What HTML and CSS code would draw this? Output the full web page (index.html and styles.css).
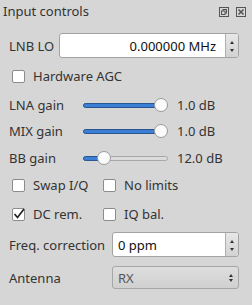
FILE: index.html
```
<!doctype html>
<html>
<head>
<meta charset="utf-8">
<title>Input controls</title>
<link rel="stylesheet" href="styles.css">
</head>
<body>
<div id="dock">
  <div class="titlebar">
    <span class="title">Input controls</span>
    <span class="tbtns">
      <svg width="10" height="10" viewBox="0 0 10 10"><rect x="0.5" y="0.5" width="9" height="9" fill="none" stroke="#555"/><rect x="4" y="2.5" width="3.5" height="3.5" fill="none" stroke="#555"/><rect x="2.5" y="4" width="3.5" height="3.5" fill="#d6d6d6" stroke="#555"/></svg>
      <svg width="10" height="10" viewBox="0 0 10 10"><rect x="0.5" y="0.5" width="9" height="9" fill="none" stroke="#555"/><path d="M2.5 2.5 L7.5 7.5 M7.5 2.5 L2.5 7.5" stroke="#555" stroke-width="1.6"/></svg>
    </span>
  </div>

  <div class="row r-lnb">
    <label class="lbl">LNB LO</label>
    <div class="spin lnb">
      <div class="spin-val right">0.000000 MHz</div>
      <div class="spin-btn"><span class="up"></span><span class="down"></span></div>
    </div>
  </div>

  <div class="row r-agc">
    <div class="check"><span class="box"></span>Hardware AGC</div>
  </div>

  <div class="row slider-row r-lna">
    <span class="lbl">LNA gain</span>
    <div class="slider"><div class="fill" style="width:77px"></div><div class="knob" style="left:70px"></div></div>
    <span class="val">1.0 dB</span>
  </div>
  <div class="row slider-row r-mix">
    <span class="lbl">MIX gain</span>
    <div class="slider"><div class="fill" style="width:77px"></div><div class="knob" style="left:70px"></div></div>
    <span class="val">1.0 dB</span>
  </div>
  <div class="row slider-row r-bb">
    <span class="lbl">BB gain</span>
    <div class="slider"><div class="fill" style="width:20px"></div><div class="knob" style="left:13px"></div></div>
    <span class="val">12.0 dB</span>
  </div>

  <div class="row r-swap">
    <div class="check c1"><span class="box"></span>Swap I/Q</div>
    <div class="check"><span class="box"></span>No limits</div>
  </div>
  <div class="row r-dc">
    <div class="check c1"><span class="box"><svg width="14" height="14" viewBox="0 0 14 14"><path d="M2.5 7 L5.5 10.5 L12 2" fill="none" stroke="#222" stroke-width="1.7"/></svg></span>DC rem.</div>
    <div class="check"><span class="box"></span>IQ bal.</div>
  </div>

  <div class="row r-freq">
    <label class="lbl">Freq. correction</label>
    <div class="spin small">
      <div class="spin-val">0 ppm</div>
      <div class="spin-btn"><span class="up"></span><span class="down"></span></div>
    </div>
  </div>
  <div class="row r-ant">
    <label class="lbl">Antenna</label>
    <div class="combo">
      <span>RX</span>
      <span class="combo-arr"><span class="up"></span><span class="down"></span></span>
    </div>
  </div>
</div>
</body>
</html>
```

FILE: styles.css
```
body {
	margin: 0;
	background: #d6d6d6;
	font-family: "Noto Sans", sans-serif;
	font-size: 13px;
	color: #333;
}
#dock {
	width: 252px;
	height: 305px;
}
.titlebar {
	height: 24px;
	display: flex;
	align-items: center;
	justify-content: space-between;
	padding: 0 6px 0 3px;
}
.title {
	margin-top: -2px;
}
.tbtns {
	display: flex;
	gap: 7px;
	margin-top: -1px;
}
.tbtns svg {
	display: block;
}
.row {
	display: flex;
	align-items: center;
	padding-left: 9px;
}
.r-lnb { margin-top: 9px; height: 25px; }
.r-agc { margin-top: 10px; height: 16px; }
.r-lna { margin-top: 12px; height: 18px; }
.r-mix { margin-top: 8px; height: 18px; }
.r-bb { margin-top: 9px; height: 18px; }
.r-swap { margin-top: 10px; height: 16px; }
.r-dc { margin-top: 13px; height: 16px; }
.r-freq { margin-top: 10px; height: 25px; }
.r-ant { margin-top: 9px; height: 23px; }

.r-lnb .lbl { width: 50px; }
.r-freq .lbl, .r-ant .lbl { width: 103px; }

/* spin boxes */
.spin {
	display: flex;
	height: 25px;
	box-sizing: border-box;
	border: 1px solid #a3a3a3;
	border-radius: 3px;
	background: #fff;
	overflow: hidden;
}
.spin.lnb { width: 180px; }
.spin.small { width: 127px; }
.spin-val {
	flex: 1;
	display: flex;
	align-items: center;
	padding-left: 5px;
	color: #111;
}
.spin-val.right {
	justify-content: flex-end;
	padding-right: 9px;
}
.spin-btn {
	width: 12px;
	border-left: 1px solid #b0b0b0;
	background: linear-gradient(#e8e8e8, #d2d2d2);
	display: flex;
	flex-direction: column;
	align-items: center;
	justify-content: space-between;
	padding: 7px 0 5px;
}
.up, .down {
	width: 0;
	height: 0;
	border-left: 2px solid transparent;
	border-right: 2px solid transparent;
}
.up { border-bottom: 3px solid #333; }
.down { border-top: 3px solid #333; }

/* check boxes */
.check {
	display: flex;
	align-items: center;
}
.check.c1 { width: 91px; }
.box {
	width: 13px;
	height: 13px;
	box-sizing: border-box;
	border: 1px solid #8c8c8c;
	border-radius: 2px;
	background: #fff;
	margin: 0 8px 0 3px;
	position: relative;
}
.box svg {
	position: absolute;
	left: -1px;
	top: -2px;
}

/* sliders */
.slider-row .lbl { width: 74px; }
.slider {
	width: 85px;
	height: 5px;
	box-sizing: border-box;
	border: 1px solid #a8a8a8;
	border-radius: 3px;
	background: #dcdcdc;
	position: relative;
}
.fill {
	position: absolute;
	left: -1px;
	top: -1px;
	height: 5px;
	box-sizing: border-box;
	background: #3a7fd5;
	border: 1px solid #2a5690;
	border-radius: 3px;
}
.knob {
	position: absolute;
	top: -6px;
	width: 14px;
	height: 14px;
	box-sizing: border-box;
	border-radius: 50%;
	background: #fbfbfb;
	border: 1px solid #9a9a9a;
}
.val {
	margin-left: 9px;
}

/* combo */
.combo {
	width: 127px;
	height: 23px;
	box-sizing: border-box;
	border: 1px solid #a6a6a6;
	border-radius: 3px;
	background: linear-gradient(#dedede, #d0d0d0);
	display: flex;
	align-items: center;
	justify-content: space-between;
	padding: 0 5px 0 5px;
	color: #555;
}
.combo-arr {
	display: flex;
	flex-direction: column;
	gap: 2px;
}
```
